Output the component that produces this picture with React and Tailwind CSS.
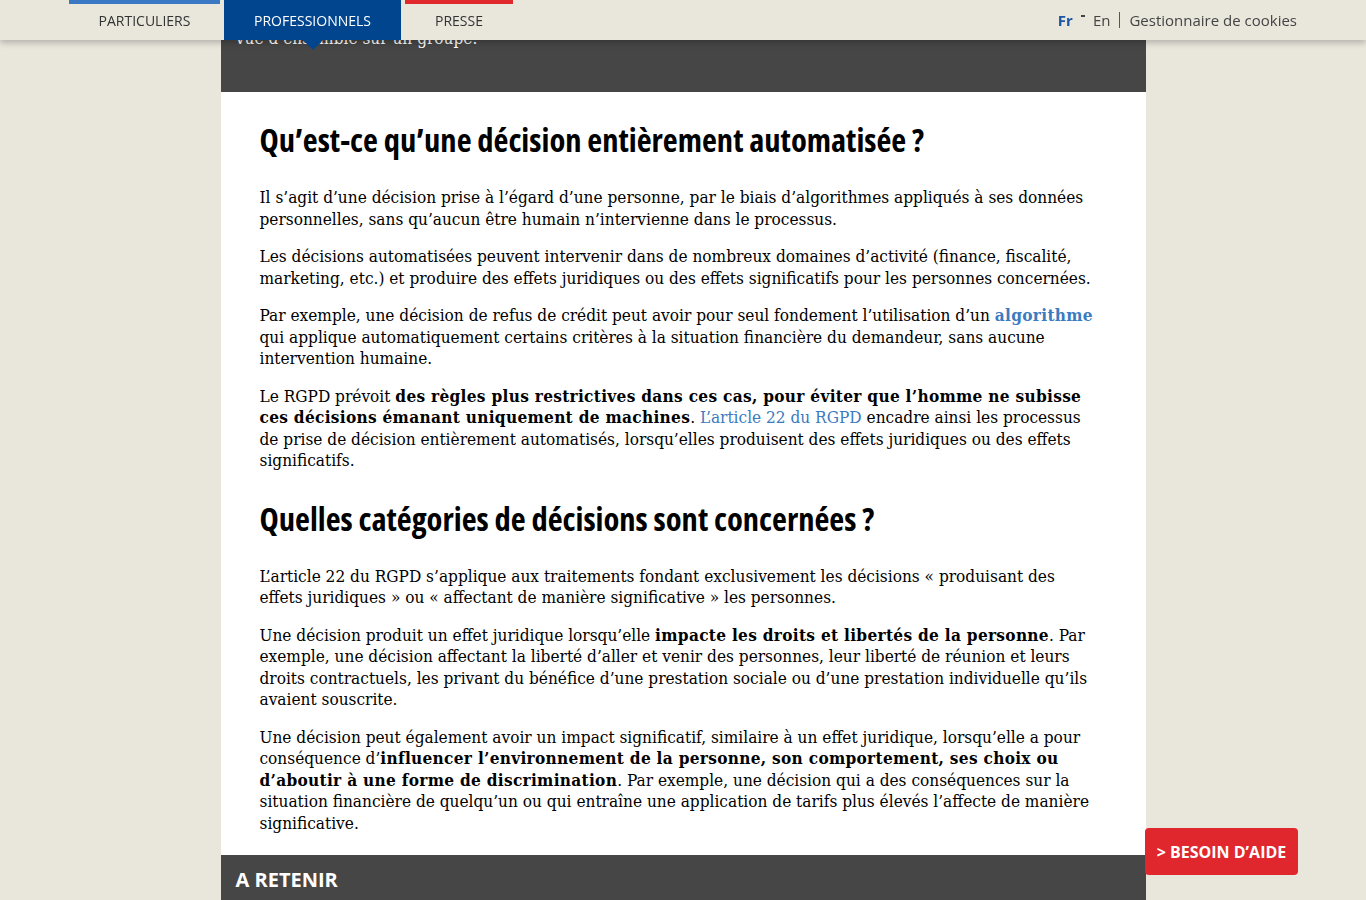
import React from "react";

const serif = { fontFamily: '"DejaVu Serif Condensed", "DejaVu Serif", Georgia, serif' };
const sans = { fontFamily: '"Open Sans", "Noto Sans", sans-serif' };
const condensed = {
  fontFamily: '"Open Sans", "Liberation Sans Narrow", sans-serif',
  fontStretch: "75%",
};

function Header() {
  return (
    <header
      className="fixed top-0 left-0 right-0 z-20 h-[40px] bg-[#e9e6dc] shadow-[0_3px_6px_rgba(0,0,0,0.22)]"
      style={sans}
    >
      <div className="mx-auto flex h-full w-[1228px] items-stretch justify-between">
        <nav className="flex items-stretch gap-[4px] text-[14px] uppercase text-[#333]">
          <a className="flex w-[151px] items-center justify-center border-t-[4px] border-[#3b78c3] pb-[4px]">
            Particuliers
          </a>
          <a className="relative flex w-[177px] items-center justify-center bg-[#00458e] text-white">
            Professionnels
            <span className="absolute left-1/2 top-full -translate-x-1/2 border-x-[10px] border-t-[10px] border-x-transparent border-t-[#00458e]" />
          </a>
          <a className="flex w-[108px] items-center justify-center border-t-[4px] border-[#e1282d] pb-[4px]">
            Presse
          </a>
        </nav>
        <div className="flex items-center text-[15px] text-[#444]">
          <span className="font-bold text-[#1a56a4]">Fr</span>
          <span className="mx-[8px] mb-[8px] inline-block h-[2px] w-[4px] bg-[#444]" />
          <span>En</span>
          <span className="mx-[9px] inline-block h-[16px] w-px bg-[#555]" />
          <span>Gestionnaire de cookies</span>
        </div>
      </div>
    </header>
  );
}

function P({ children }) {
  return <p className="mt-[16px] whitespace-nowrap first:mt-0">{children}</p>;
}

function B({ children }) {
  return <strong className="font-bold tracking-[0.3px]">{children}</strong>;
}

function H2({ children, className = "" }) {
  return (
    <h2
      className={"text-[32.5px] font-bold leading-[40px] text-black " + className}
      style={condensed}
    >
      {children}
    </h2>
  );
}

const body = "mt-[27px] text-[17.1px] leading-[21.5px] text-black";

export default function App() {
  return (
    <div className="min-h-[900px] bg-[#e9e6dc]">
      <Header />
      <main className="mx-auto w-[925px]">
        <div className="h-[92px] bg-[#464646] px-[14px] pt-[28px] text-[17.1px] leading-[21.5px] text-white" style={serif}>
          Vue d’ensemble sur un groupe.
        </div>

        <section className="bg-white px-[39px] pb-[21px] pt-[28px]">
          <H2>Qu’est-ce qu’une décision entièrement automatisée ?</H2>
          <div className={body} style={serif}>
            <P>
              Il s’agit d’une décision prise à l’égard d’une personne, par le biais d’algorithmes appliqués à ses données
              <br />
              personnelles, sans qu’aucun être humain n’intervienne dans le processus.
            </P>
            <P>
              Les décisions automatisées peuvent intervenir dans de nombreux domaines d’activité (finance, fiscalité,
              <br />
              marketing, etc.) et produire des effets juridiques ou des effets significatifs pour les personnes concernées.
            </P>
            <P>
              Par exemple, une décision de refus de crédit peut avoir pour seul fondement l’utilisation d’un{" "}
              <a className="font-bold tracking-[0.3px] text-[#3b7bc0]">algorithme</a>
              <br />
              qui applique automatiquement certains critères à la situation financière du demandeur, sans aucune
              <br />
              intervention humaine.
            </P>
            <P>
              Le RGPD prévoit <B>des règles plus restrictives dans ces cas, pour éviter que l’homme ne subisse</B>
              <br />
              <B>ces décisions émanant uniquement de machines</B>.{" "}
              <a className="text-[#3b7bc0]">L’article 22 du RGPD</a> encadre ainsi les processus
              <br />
              de prise de décision entièrement automatisés, lorsqu’elles produisent des effets juridiques ou des effets
              <br />
              significatifs.
            </P>
          </div>

          <H2 className="mt-[27px]">Quelles catégories de décisions sont concernées ?</H2>
          <div className={body} style={serif}>
            <P>
              L’article 22 du RGPD s’applique aux traitements fondant exclusivement les décisions « produisant des
              <br />
              effets juridiques » ou « affectant de manière significative » les personnes.
            </P>
            <P>
              Une décision produit un effet juridique lorsqu’elle <B>impacte les droits et libertés de la personne</B>. Par
              <br />
              exemple, une décision affectant la liberté d’aller et venir des personnes, leur liberté de réunion et leurs
              <br />
              droits contractuels, les privant du bénéfice d’une prestation sociale ou d’une prestation individuelle qu’ils
              <br />
              avaient souscrite.
            </P>
            <P>
              Une décision peut également avoir un impact significatif, similaire à un effet juridique, lorsqu’elle a pour
              <br />
              conséquence d’<B>influencer l’environnement de la personne, son comportement, ses choix ou</B>
              <br />
              <B>d’aboutir à une forme de discrimination</B>. Par exemple, une décision qui a des conséquences sur la
              <br />
              situation financière de quelqu’un ou qui entraîne une application de tarifs plus élevés l’affecte de manière
              <br />
              significative.
            </P>
          </div>
        </section>

        <div className="bg-[#464646] px-[15px] pb-[40px] pt-[12px]">
          <h3 className="text-[20px] font-bold uppercase leading-[26px] text-white" style={sans}>
            A retenir
          </h3>
        </div>
      </main>

      <a
        className="fixed bottom-[25px] right-[68px] z-30 flex h-[47px] w-[153px] items-center justify-center rounded-[4px] bg-[#df272d] text-[16px] font-bold text-white"
        style={sans}
      >
        &gt; BESOIN D’AIDE
      </a>
    </div>
  );
}
